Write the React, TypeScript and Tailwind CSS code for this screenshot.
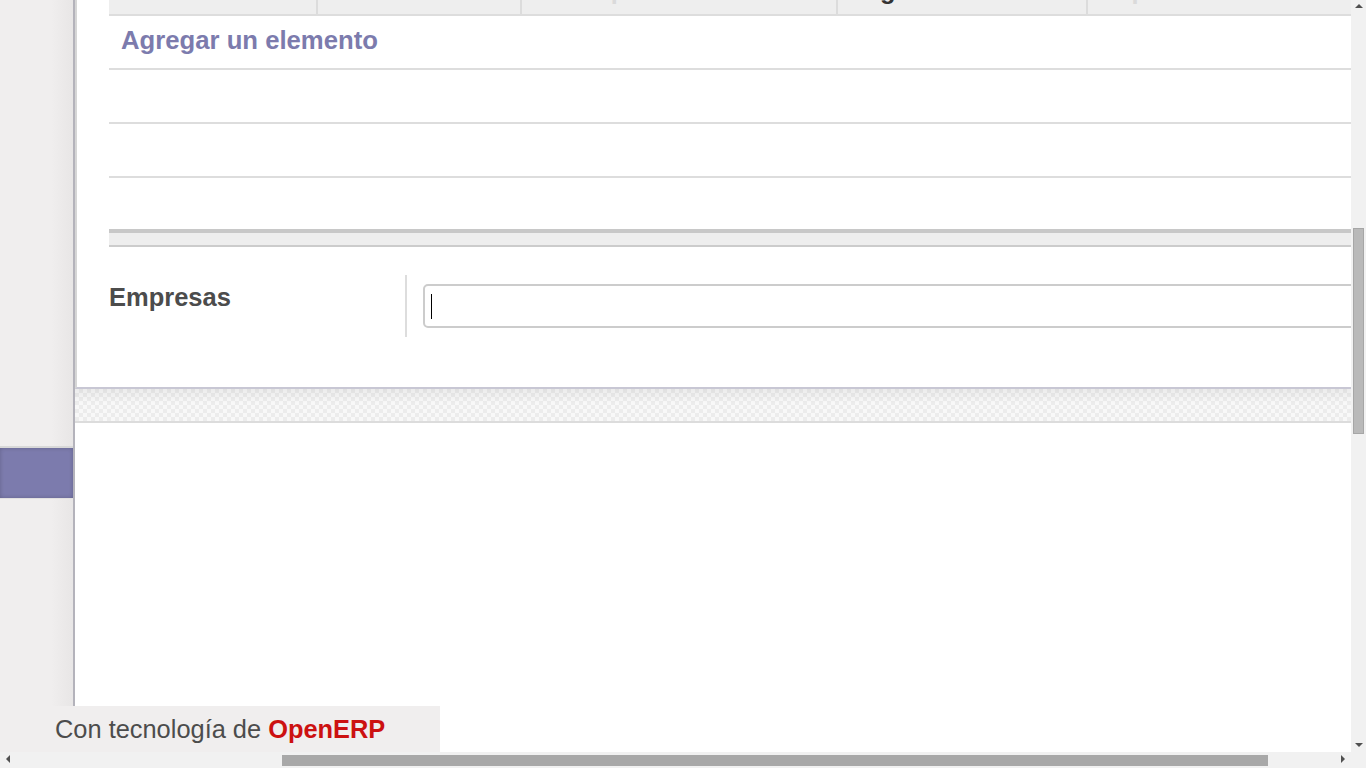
import { ReactNode } from "react";

// columnas de la cabecera (solo se ve el borde inferior del texto)
const headerCols: { label: string; width: string; dark?: boolean }[] = [
  { label: "Usuario", width: "w-[207px]" },
  { label: "Leer", width: "w-[204px]" },
  { label: "Descripción", width: "w-[316px]" },
  { label: "Lugar", width: "w-[250px]", dark: true },
  { label: "Suprimir", width: "flex-1" },
];

function Arrow({ dir }: { dir: "up" | "down" | "left" | "right" }) {
  const pts = {
    up: "0,7 4,3 8,7",
    down: "0,3 8,3 4,7",
    left: "6,0 6,8 2,4",
    right: "2,0 2,8 6,4",
  }[dir];
  return (
    <svg width="8" height="10" viewBox="0 0 8 10" className="block">
      <polygon points={pts} fill="#505050" />
    </svg>
  );
}

function Row({ children }: { children?: ReactNode }) {
  return (
    <div className="h-[54px] border-b-2 border-[#dddddd] flex items-center px-3 pb-[4px]">
      {children}
    </div>
  );
}

export default function App() {
  return (
    <div className="h-screen w-screen overflow-hidden flex flex-col bg-white font-['Liberation_Sans',Arial,sans-serif] relative">
      <div className="flex-1 min-h-0 flex">
        {/* barra lateral */}
        <div className="w-[75px] shrink-0 bg-[linear-gradient(90deg,#f0eeee_70%,#e8e6e6)] border-r-2 border-[#b4b3bb] flex flex-col">
          <div className="h-[446px]" />
          <div className="h-[2px] bg-[#d8d8d8]" />
          <div className="h-[50px] bg-[#7c7bad] shadow-[inset_0_0_4px_rgba(0,0,0,0.2)]" />
          <div className="h-[1px] bg-[#e2e0e0]" />
        </div>

        {/* contenido */}
        <div className="flex-1 min-w-0 overflow-hidden flex flex-col">
          <div className="h-[389px] shrink-0 bg-white border-l-2 border-[#d6d6d6] border-b-2 border-b-[#c8c7d4] pl-[32px] flex flex-col">
            {/* cabecera de la lista */}
            <div className="h-[16px] bg-[#eeeeee] border-b-2 border-[#dddddd] flex">
              {headerCols.map((c, i) => (
                <div
                  key={c.label}
                  className={`${c.width} h-full overflow-hidden flex items-end px-[11px] ${
                    i > 0 ? "border-l-2 border-[#dcdcdc]" : ""
                  }`}
                >
                  <span
                    className={`text-[25.4px] font-bold leading-[26px] -translate-y-[11px] whitespace-nowrap ${
                      c.dark ? "text-[#333333]" : "text-[#dadada]"
                    }`}
                  >
                    {c.label}
                  </span>
                </div>
              ))}
            </div>

            <Row>
              <span className="text-[25.7px] font-bold text-[#7c7bad]">Agregar un elemento</span>
            </Row>
            <Row />
            <Row />
            <div className="h-[51px]" />
            <div className="h-[18px] bg-[#eeeeee] border-t-4 border-[#c8c8c8] border-b-2 border-b-[#cccccc]" />

            {/* campo Empresas */}
            <div className="mt-[28px] h-[62px] flex items-stretch">
              <div className="w-[296px] pt-[3px] text-[25.5px] font-bold text-[#4c4c4c]">Empresas</div>
              <div className="w-[2px] bg-[#dddddd]" />
              <div className="flex-1 pl-[16px] pt-[9px]">
                <div className="h-[44px] -mr-[10px] border-2 border-[#cccccc] rounded-[5px] bg-white flex items-center pl-[6px]">
                  <div className="w-[1px] h-[25px] bg-black" />
                </div>
              </div>
            </div>
          </div>

          {/* franja de cuadros */}
          <div className="h-[34px] shrink-0 border-b-2 border-[#dcdcdc] bg-[linear-gradient(rgba(0,0,0,0.05),rgba(0,0,0,0)_45%),conic-gradient(#ececec_25%,#f8f8f8_0_50%,#ececec_0_75%,#f8f8f8_0)] bg-[length:100%_100%,8px_8px]" />
          <div className="flex-1 bg-white" />
        </div>

        {/* barra vertical */}
        <div className="w-[15px] shrink-0 bg-[#f1f1f1] flex flex-col items-center">
          <div className="h-[12px] pt-[1px]">
            <Arrow dir="up" />
          </div>
          <div className="h-[216px]" />
          <div className="w-[11px] h-[206px] bg-[#b9b9b9] border border-[#a6a6a6]" />
          <div className="flex-1" />
          <div className="h-[12px]">
            <Arrow dir="down" />
          </div>
        </div>
      </div>

      {/* barra horizontal */}
      <div className="h-[16px] shrink-0 bg-[#f1f1f1] flex items-center">
        <div className="w-[16px] flex justify-center">
          <Arrow dir="left" />
        </div>
        <div className="w-[266px]" />
        <div className="w-[986px] h-[11px] bg-[#a8a8a8]" />
        <div className="flex-1" />
        <div className="w-[16px] flex justify-center mr-[15px]">
          <Arrow dir="right" />
        </div>
      </div>

      {/* pie fijo */}
      <div className="absolute left-0 bottom-[16px] w-[440px] h-[46px] bg-[#f0eeee] flex items-center pl-[55px] text-[25.4px] text-[#4c4c4c] whitespace-nowrap">
        Con tecnología de&nbsp;<span className="font-bold text-[#cc1111]">OpenERP</span>
      </div>
    </div>
  );
}
